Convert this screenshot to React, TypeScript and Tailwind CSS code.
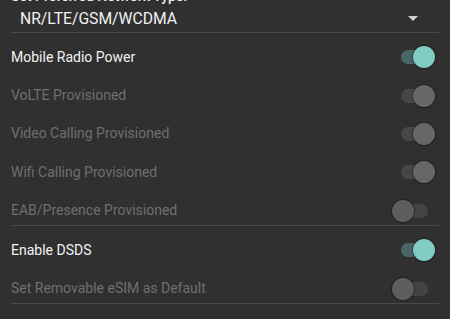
import React from 'react';

type Row = {
  label: string;
  checked: boolean;
  enabled: boolean;
};

const radioRows: Row[] = [
  { label: 'Mobile Radio Power', checked: true, enabled: true },
  { label: 'VoLTE Provisioned', checked: true, enabled: false },
  { label: 'Video Calling Provisioned', checked: true, enabled: false },
  { label: 'Wifi Calling Provisioned', checked: true, enabled: false },
  { label: 'EAB/Presence Provisioned', checked: false, enabled: false },
];

const simRows: Row[] = [
  { label: 'Enable DSDS', checked: true, enabled: true },
  { label: 'Set Removable eSIM as Default', checked: false, enabled: false },
];

function Toggle({ checked, enabled }: { checked: boolean; enabled: boolean }) {
  const track = checked && enabled ? 'bg-[#4a6664]' : checked ? 'bg-[#474747]' : 'bg-[#434343]';
  const thumb = checked && enabled ? 'bg-[#80cbc4]' : checked ? 'bg-[#676767]' : 'bg-[#5e5e5e]';
  return (
    <div className="relative w-[43px] h-[22px] shrink-0">
      <div className={`absolute left-[9px] top-[4px] w-[27px] h-[14px] rounded-full ${track}`} />
      <div
        className={`absolute top-0 w-[22px] h-[22px] rounded-full shadow-[0_0_1px_1px_rgba(0,0,0,0.35)] ${thumb} ${
          checked ? 'left-[21px]' : 'left-0'
        }`}
      />
    </div>
  );
}

function SwitchRow({ row }: { row: Row }) {
  return (
    <div className="flex items-center justify-between h-[38.4px] pl-[11px] pr-[15px]">
      <span className={`text-[14px] ${row.enabled ? 'text-[#f2f2f2]' : 'text-[#6f6f6f]'}`}>{row.label}</span>
      <Toggle checked={row.checked} enabled={row.enabled} />
    </div>
  );
}

export default function App() {
  return (
    <div
      className="w-[450px] h-[319px] overflow-hidden bg-[#303030]"
      style={{ fontFamily: 'Roboto, "Noto Sans", sans-serif' }}
    >
      {/* Preferred network type */}
      <div className="mt-[-14px] pl-[11px] text-[14px] leading-[20px] font-medium text-[#f2f2f2]">
        Set Preferred Network Type:
      </div>
      <div className="flex items-center justify-between h-[26px] pl-[20px] pr-[32px]">
        <span className="text-[15.7px] text-[#f2f2f2]">NR/LTE/GSM/WCDMA</span>
        <svg width="10" height="5" viewBox="0 0 10 5" className="mt-[-1px]">
          <path d="M0 0 L10 0 L5 5 Z" fill="#d2d2d2" />
        </svg>
      </div>
      <div className="mx-[11px] h-px bg-[#4a4a4a]" />

      {/* Radio section */}
      <div className="pt-[5px]">
        {radioRows.map((row) => (
          <SwitchRow key={row.label} row={row} />
        ))}
      </div>
      <div className="mx-[11px] mt-[-5px] h-px bg-[#4a4a4a]" />

      {/* SIM section */}
      <div className="pt-[5px]">
        {simRows.map((row) => (
          <SwitchRow key={row.label} row={row} />
        ))}
      </div>
      <div className="mx-[11px] mt-[-5px] h-px bg-[#4a4a4a]" />
    </div>
  );
}
